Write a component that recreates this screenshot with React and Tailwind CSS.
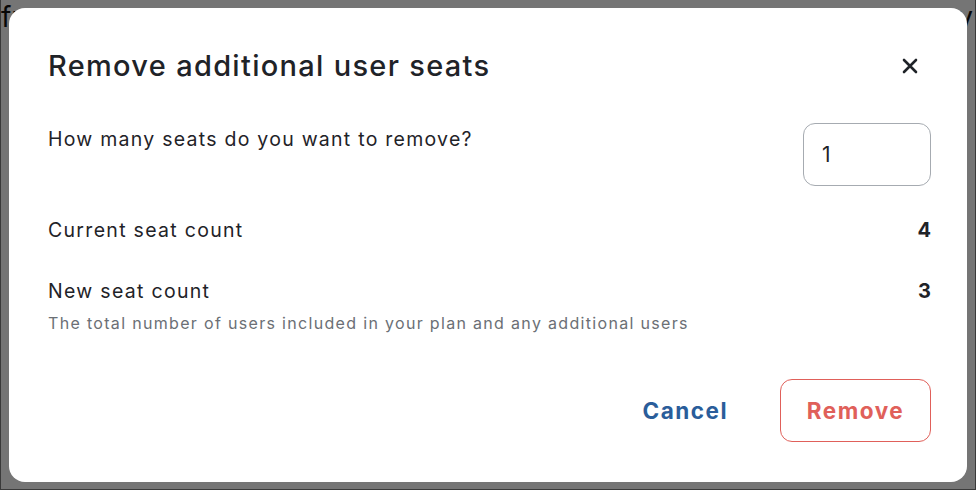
import { useState } from 'react'

function Row({ label, value, hint }) {
  return (
    <div className="flex justify-between items-start">
      <div>
        <p className="text-[19.5px] leading-[26px] tracking-[1.3px] text-[#1f2328]">{label}</p>
        {hint && (
          <p className="mt-[8px] text-[16px] leading-[22px] tracking-[1.32px] text-[#6b6f75]">{hint}</p>
        )}
      </div>
      <span className="text-[20px] leading-[26px] font-bold text-[#1f2328]">{value}</span>
    </div>
  )
}

export default function App() {
  const [seats, setSeats] = useState('1')

  return (
    <div className="relative w-[976px] h-[490px] overflow-hidden bg-white font-['Inter',sans-serif]">
      <div className="flex justify-between pl-[1px] pr-[3px] text-[28px] leading-[34px] text-[#111]">
        <span>fr</span>
        <span>y</span>
      </div>

      <div className="absolute inset-0 bg-black/[0.54] border-l border-r border-b border-[#3a3a3a] p-[8px]">
        <div className="w-[958px] h-[474px] bg-white rounded-[16px] pl-[39px] pr-[36px] pt-[36px] pb-[40px] flex flex-col">
          <div className="flex items-center justify-between">
            <h2 className="text-[29px] leading-[44px] font-medium text-[#1f2328] tracking-[1.3px]">
              Remove additional user seats
            </h2>
            <button className="w-[24px] h-[24px] mr-[9px] flex items-center justify-center text-[#1f2328]">
              <svg width="16" height="16" viewBox="0 0 16 16" fill="none" stroke="currentColor" strokeWidth="2.6" strokeLinecap="round">
                <path d="M2 2L14 14M14 2L2 14" />
              </svg>
            </button>
          </div>

          <div className="mt-[35px] flex justify-between items-start">
            <p className="text-[19.5px] leading-[26px] tracking-[1.25px] text-[#1f2328] pt-[3px]">
              How many seats do you want to remove?
            </p>
            <input
              value={seats}
              onChange={(e) => setSeats(e.target.value)}
              className="w-[128px] h-[63px] rounded-[12px] border border-[#a6abb1] px-[18px] text-[21px] text-[#1f2328] outline-none"
            />
          </div>

          <div className="mt-[31px] flex flex-col gap-[35px]">
            <Row label="Current seat count" value="4" />
            <Row label="New seat count" value="3" hint="The total number of users included in your plan and any additional users" />
          </div>

          <div className="mt-auto flex items-center justify-end gap-[52px]">
            <button className="text-[22.5px] font-bold tracking-[1.5px] text-[#2a5d9a]">Cancel</button>
            <button className="w-[151px] h-[63px] rounded-[12px] border border-[#e0605a] text-[22.5px] font-bold tracking-[1.5px] text-[#e0605a]">
              Remove
            </button>
          </div>
        </div>
      </div>
    </div>
  )
}
